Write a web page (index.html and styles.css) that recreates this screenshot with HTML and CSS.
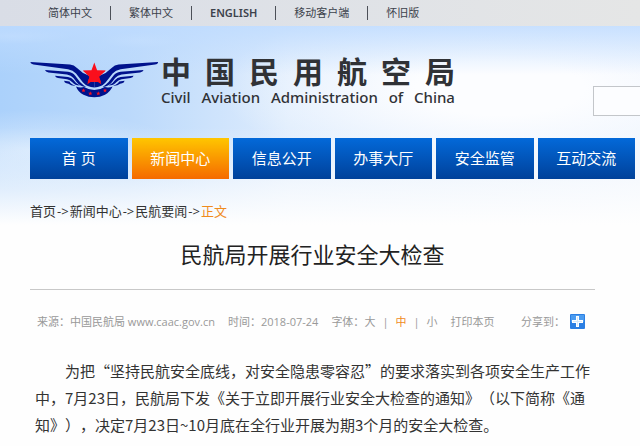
FILE: index.html
```html
<!DOCTYPE html>
<html lang="zh-CN">
<head>
    <meta charset="UTF-8">
    <meta name="viewport" content="width=device-width, initial-scale=1.0">
    <title>民航局开展行业安全大检查</title>
    <link rel="stylesheet" href="styles.css">
</head>
<body>

<div class="topbar">
    <a href="#">简体中文</a>
    <a href="#">繁体中文</a>
    <a href="#" class="en">ENGLISH</a>
    <a href="#">移动客户端</a>
    <a href="#">怀旧版</a>
</div>

<div class="sky">
    <div class="header">
        <svg class="logo" viewBox="0 0 128 36" width="128" height="36" aria-hidden="true">
            <defs>
                <g id="wing" fill="#00128c">
                    <path d="M.5 0 L40 2.600 Q44 3 47 6 L53 11 L64.300 16 V25.500 Q57 25 53 20.500 L46 11.500 Q43 8 38 7.200 L3.500 2.400 Q.5 2 .5 0Z"/>
                    <path d="M15 8 L38 9.800 Q42.500 10.200 45 13.500 L50 20 Q53 23 56 25 Q50 24.500 46.500 20 L43.500 16 Q41 13 37 12.400 L18.500 10.400 Q15.500 10 15 8Z"/>
                    <path d="M25 13.700 L38 14.900 Q41.500 15.400 43.500 18 Q46 22 50 23.600 Q45 23.600 42 20 Q40 17.700 37 17.200 L28 16 Q25.500 15.500 25 13.700Z"/>
                    <path d="M34 18.800 L39.500 19.400 Q41 22.500 45.500 23.600 Q41.500 24 38.500 21.800 L36.500 21.300 Q34.500 20.800 34 18.800Z"/>
                </g>
                <path id="star" d="M0 -12 L2.900 -3.900 L11.400 -3.700 L4.600 1.500 L7 9.700 L0 4.900 L-7 9.700 L-4.600 1.500 L-11.400 -3.700 L-2.900 -3.900Z"/>
            </defs>
            <use href="#wing"/>
            <use href="#wing" transform="translate(128.600 0) scale(-1 1)"/>
            <path fill="#00128c" d="M46 24.500 Q50 26 54 25 Q59 28 64.300 28 Q70 28 74.600 25 Q79 26 82.600 24.500 Q80 30 75 32.800 Q70 35.300 64.300 35.300 Q58.500 35.300 53.500 32.800 Q48 30 46 24.500Z"/>
            <path fill="#f81420" d="M53 8.500 H75.600 L69 15 L71 20 H57.600 L59.600 15Z"/>
            <g fill="#fa0f1c">
                <use href="#star" transform="translate(64.300 12.500)"/>
                <use href="#star" transform="translate(53.500 28.500) scale(.19)"/>
                <use href="#star" transform="translate(60.300 31.500) scale(.19)"/>
                <use href="#star" transform="translate(68.300 31.500) scale(.19)"/>
                <use href="#star" transform="translate(75 28.500) scale(.19)"/>
            </g>
        </svg>
        <div class="brand">
            <div class="brand-cn">
                <span>中</span><span>国</span><span>民</span><span>用</span><span>航</span><span>空</span><span>局</span>
            </div>
            <div class="brand-en"><span>Civil</span> <span>Aviation</span> <span>Administration</span> <span>of</span> <span>China</span></div>
        </div>
        <input class="search" type="text" aria-label="搜索">
    </div>

    <div class="nav">
        <a href="#">首 页</a>
        <a href="#" class="active">新闻中心</a>
        <a href="#">信息公开</a>
        <a href="#">办事大厅</a>
        <a href="#">安全监管</a>
        <a href="#">互动交流</a>
    </div>

    <div class="crumbs"><a href="#">首页</a><span>-&gt;</span><a href="#">新闻中心</a><span>-&gt;</span><a href="#">民航要闻</a><span>-&gt;</span><a href="#" class="current">正文</a></div>
</div>

<div class="article">
    <h1>民航局开展行业安全大检查</h1>
    <div class="meta">
        <span class="source">来源：中国民航局 www.caac.gov.cn</span>
        <span class="date">时间：2018-07-24</span>
        <span class="size">字体：<a href="#">大</a><i>|</i><a href="#" class="current">中</a><i>|</i><a href="#">小</a></span>
        <a href="#" class="print">打印本页</a>
        <span class="share">分享到：
            <a href="#" aria-label="分享">
                <svg viewBox="0 0 15 15" width="15" height="15">
                    <rect width="15" height="15" rx="1" fill="#2b7fe3"/>
                    <rect x="1" y="1" width="13" height="7" fill="#4b9cf0"/>
                    <path d="M6 2h3v4h4v3H9v4H6V9H2V6h4z" fill="#fff"/>
                    <path d="M7 3h1v4h4v1H8v4H7V8H3V7h4z" fill="#d5e9fd"/>
                </svg>
            </a>
        </span>
    </div>
    <p>为把“坚持民航安全底线，对安全隐患零容忍”的要求落实到各项安全生产工作中，7月23日，民航局下发《关于立即开展行业安全大检查的通知》（以下简称《通知》），决定7月23日~10月底在全行业开展为期3个月的安全大检查。</p>
</div>

</body>
</html>
```

FILE: styles.css
```css
body {
    font-family: "Open Sans", "Noto Sans CJK SC", sans-serif;
    margin: 0;
    padding: 0;
    background: #fefefe;
    color: #333;
    overflow-x: hidden;
    text-spacing-trim: space-all;
}
a {
    color: inherit;
    text-decoration: none;
}
.topbar {
    display: flex;
    align-items: center;
    height: 26px;
    padding-left: 30px;
    background: linear-gradient(to right, #d9dde6, #dfe2e7 50%, #e5e6e6);
    font-size: 11px;
    line-height: 14px;
    color: #3c424c;
}
.topbar a {
    padding: 0 18px;
    border-right: 1px solid #4c5058;
    white-space: nowrap;
}
.topbar a:last-child {
    border-right: 0;
}
.topbar .en {
    font-family: "Noto Sans", sans-serif;
    font-weight: 600;
}
/* sky photo behind the logo and menu, fading to the white page */
.sky {
    overflow: hidden;
    background:
        linear-gradient(to bottom, rgba(254, 254, 254, 0) 50%, rgba(254, 254, 254, 0.6) 78%, #fefefe 98%),
        linear-gradient(to bottom, rgba(190, 219, 255, 0.8), rgba(190, 219, 255, 0) 24%),
        radial-gradient(ellipse 150px 40px at 30px 124px, rgba(240, 247, 255, 0.5), rgba(240, 247, 255, 0)),
        radial-gradient(ellipse 60px 8px at 12px 10px, rgba(235, 245, 255, 0.3), rgba(235, 245, 255, 0)),
        radial-gradient(ellipse 40px 8px at 140px 14px, rgba(225, 240, 255, 0.3), rgba(225, 240, 255, 0)),
        radial-gradient(ellipse 280px 90px at 500px 62px, #fcfdff 30%, rgba(252, 253, 255, 0)),
        linear-gradient(to right, #abd1fb, #bbd9fb 20%, #deecfd 45%, #edf4fe);
}
.header {
    display: flex;
    height: 112px;
    padding-left: 30px;
}
.logo {
    flex: none;
    margin-top: 36px;
}
.brand {
    flex: none;
    width: 294px;
    margin: 30px 138px 0 3px;
    color: #303236;
}
.brand-cn {
    display: flex;
    justify-content: space-between;
    font-size: 30px;
    font-weight: bold;
    line-height: 32px;
}
.brand-en {
    display: flex;
    justify-content: space-between;
    font-family: "Noto Sans", sans-serif;
    font-size: 15px;
    font-weight: 500;
    line-height: 18px;
}
.search {
    flex: none;
    box-sizing: border-box;
    width: 180px;
    height: 30px;
    margin-top: 60px;
    border: 1px solid #c3c6ca;
    background: #fcfdff;
}
.nav {
    display: grid;
    grid-template-columns: repeat(6, 1fr);
    gap: 4px;
    padding: 0 5px 0 30px;
}
.nav a {
    background: linear-gradient(to bottom, #0369d9, #00419a);
    color: #fff;
    font-size: 15px;
    line-height: 41px;
    text-align: center;
}
.nav .active {
    background: linear-gradient(to bottom, #ffc600, #f56a00);
}
.crumbs {
    padding: 22px 30px 8px;
    font-size: 13px;
    line-height: 20px;
}
.crumbs span {
    padding: 0 1px;
}
.current {
    color: #f08b1d;
}
.article {
    padding: 0 45px 0 30px;
}
.article h1 {
    margin: 0;
    padding: 9px 0 19px;
    border-bottom: 1px solid #c8c8c8;
    color: #222;
    font-size: 22px;
    font-weight: normal;
    line-height: 32px;
    text-align: center;
}
.meta {
    display: flex;
    align-items: center;
    gap: 13px;
    height: 62px;
    padding: 0 10px 0 7px;
    color: #999;
    font-size: 11px;
    white-space: nowrap;
}
.meta i {
    padding: 0 7px;
    font-style: normal;
}
.share {
    display: flex;
    align-items: center;
    gap: 5px;
    margin-left: auto;
}
.share svg {
    display: block;
}
.article p {
    margin: 0;
    padding: 5px 0 5px 5px;
    font-family: "Noto Sans CJK SC", sans-serif;
    font-size: 15px;
    line-height: 27px;
    text-indent: 2em;
}
```
